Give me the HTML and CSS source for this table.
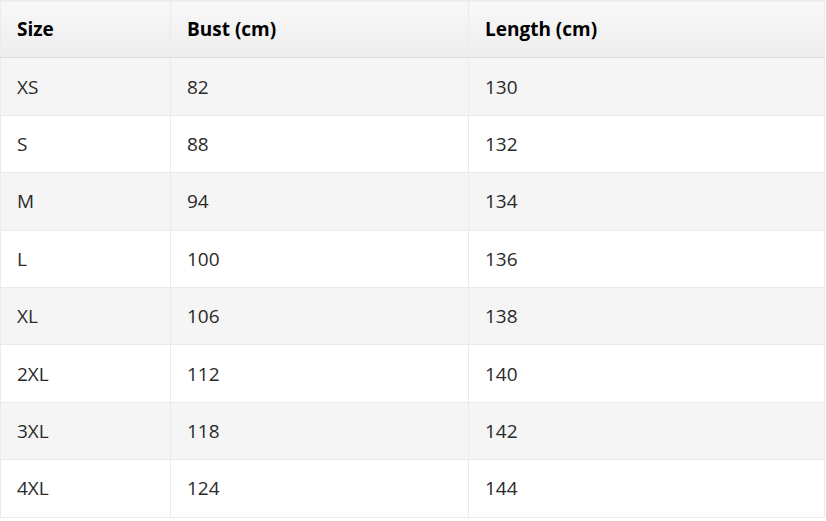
FILE: index.html
```html
<!DOCTYPE html>
<html>
<head>
<meta charset="utf-8">
<link rel="stylesheet" href="styles.css">
</head>
<body>
<table class="size-table">
  <colgroup>
    <col class="c1"><col class="c2"><col class="c3">
  </colgroup>
  <thead>
    <tr><th>Size</th><th>Bust (cm)</th><th>Length (cm)</th></tr>
  </thead>
  <tbody>
    <tr><td>XS</td><td>82</td><td>130</td></tr>
    <tr><td>S</td><td>88</td><td>132</td></tr>
    <tr><td>M</td><td>94</td><td>134</td></tr>
    <tr><td>L</td><td>100</td><td>136</td></tr>
    <tr><td>XL</td><td>106</td><td>138</td></tr>
    <tr><td>2XL</td><td>112</td><td>140</td></tr>
    <tr><td>3XL</td><td>118</td><td>142</td></tr>
    <tr><td>4XL</td><td>124</td><td>144</td></tr>
  </tbody>
</table>
</body>
</html>
```
FILE: styles.css
```css
html, body {
  margin: 0;
  padding: 0;
  background: #fff;
}
.size-table {
  width: 825px;
  border-collapse: collapse;
  font-family: "Open Sans", "Noto Sans", sans-serif;
  font-size: 19px;
  color: #2a2a2a;
  table-layout: fixed;
}
.c1 { width: 170px; }
.c2 { width: 298px; }
.c3 { width: auto; }
.size-table th,
.size-table td {
  border: 1px solid #ebebeb;
  padding: 0 16px;
  height: 56.4px;
  text-align: left;
  vertical-align: middle;
}
.size-table td {
  font-weight: 380;
}
.size-table th {
  font-weight: 700;
  color: #000;
  background: linear-gradient(to bottom, #f8f8f8, #ededed);
  border-bottom: 1px solid #dcdcdc;
}
.size-table tbody tr:nth-child(odd) td {
  background: #f5f5f5;
}
.size-table tbody tr:nth-child(even) td {
  background: #fff;
}
```
